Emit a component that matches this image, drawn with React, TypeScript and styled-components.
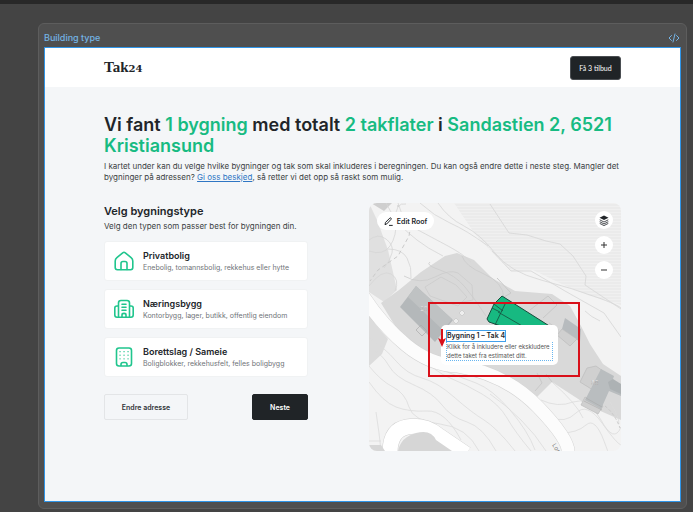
import React from "react";
import styled, { createGlobalStyle } from "styled-components";

const GlobalStyle = createGlobalStyle`
  * { box-sizing: border-box; }
  body { margin: 0; background: #444444; font-family: Inter, sans-serif; color: #212529; }
  button { font-family: inherit; color: inherit; cursor: pointer; margin: 0; }
  h1, h2, p { margin: 0; }
`;

const Canvas = styled.div`
  min-height: 100vh;
  border-top: 4px solid #282828;
  padding: 19px 6px 4px 38px;
`;

const Section = styled.section`
  background: #4f4f4f;
  border: 1px solid #5d5d5d;
  border-radius: 6px;
  padding: 0 5px 6px;
`;

const FrameLabel = styled.div`
  display: flex;
  align-items: center;
  justify-content: space-between;
  height: 23px;
  padding: 4px 1px 0 0;
  font-size: 9px;
  font-weight: 500;
  color: #74b4e6;
`;

const Frame = styled.div`
  border: 1px solid #2f95e8;
  background: #f4f6f8;
  min-height: 455px;
`;

const Header = styled.header`
  display: flex;
  align-items: center;
  justify-content: space-between;
  height: 39px;
  padding: 0 59px;
  background: #fff;
`;

const Logo = styled.a`
  font-family: "Liberation Serif", serif;
  font-size: 15px;
  line-height: 18px;
  font-weight: 700;
  color: #212529;
  text-decoration: none;
`;

const LogoNumber = styled.span`
  font-family: "DejaVu Serif", serif;
  font-size: 10px;
`;

const QuoteButton = styled.button`
  width: 51px;
  height: 24px;
  padding: 0;
  border: 1px solid #4a4e52;
  border-radius: 3px;
  background: #202427;
  color: #fff;
  font-family: Lato, sans-serif;
  font-size: 7px;
`;

const Main = styled.main`
  padding: 27px 59px 0;
`;

const Title = styled.h1`
  font-size: 18px;
  line-height: 21px;
  font-weight: 600;
`;

const Green = styled.span`
  color: #17bb82;
`;

const Text = styled.p`
  font-size: 8px;
  line-height: 11px;
  color: #3b3f43;
`;

const Intro = styled(Text)`
  padding-top: 5px;
`;

const Link = styled.a`
  color: #2f76c4;
`;

const Columns = styled.div`
  display: grid;
  grid-template-columns: 17fr 21fr;
  gap: 61px;
  align-items: start;
  padding-top: 20px;
`;

const Subtitle = styled.h2`
  font-size: 11px;
  line-height: 16px;
  font-weight: 600;
  padding-bottom: 2px;
`;

const CardList = styled.div`
  display: grid;
  gap: 8px;
  padding: 9px 0 17px;
`;

const Card = styled.button`
  display: flex;
  align-items: center;
  gap: 9px;
  height: 40px;
  padding: 0 9px;
  border: 1px solid #f0f2f3;
  border-radius: 3px;
  background: #fff;
  text-align: left;
`;

const CardIcon = styled.svg`
  width: 20px;
  height: 20px;
  flex: none;
  fill: none;
  stroke: #20c58d;
  stroke-width: 1.6;
  stroke-linecap: round;
  stroke-linejoin: round;
`;

const CardText = styled.span`
  display: grid;
  white-space: nowrap;
`;

const CardTitle = styled.span`
  font-size: 9px;
  line-height: 12px;
  font-weight: 600;
`;

const CardHint = styled.span`
  font-size: 7px;
  line-height: 11px;
  color: #6f7478;
`;

const Actions = styled.div`
  display: flex;
  justify-content: space-between;
`;

const ActionButton = styled.button<{ $primary?: boolean }>`
  height: 26px;
  width: ${(p) => (p.$primary ? 56 : 84)}px;
  padding: 0;
  border: 1px solid ${(p) => (p.$primary ? "#202427" : "#e3e5e7")};
  border-radius: 2px;
  background: ${(p) => (p.$primary ? "#202427" : "transparent")};
  color: ${(p) => (p.$primary ? "#fff" : "#303438")};
  font-size: 7px;
  font-weight: 600;
`;

const MapPanel = styled.div`
  position: relative;
  aspect-ratio: 252 / 248;
`;

const MapArt = styled.svg`
  display: block;
  width: 100%;
  height: 100%;
  border-radius: 8px;
`;

const EditButton = styled.button`
  position: absolute;
  top: 9px;
  left: 8px;
  display: flex;
  align-items: center;
  justify-content: center;
  gap: 4px;
  width: 57px;
  height: 18px;
  padding: 0;
  border: 0;
  border-radius: 9px;
  background: #fff;
  font-size: 7px;
  font-weight: 600;
  white-space: nowrap;
`;

const MapControls = styled.div`
  position: absolute;
  top: 8px;
  right: 8px;
  display: grid;
  gap: 7px;
`;

const RoundButton = styled.button`
  display: grid;
  place-items: center;
  width: 18px;
  height: 18px;
  padding: 0;
  border: 0;
  border-radius: 50%;
  background: #fff;
`;

const Tooltip = styled.div`
  position: absolute;
  left: 72px;
  top: 122px;
  width: 117px;
  height: 40px;
  padding: 5px;
  border-radius: 5px;
  background: #fff;
`;

const TooltipTitle = styled.div`
  width: max-content;
  border: 1px solid #42a0ea;
  font-size: 7px;
  line-height: 10px;
  font-weight: 600;
`;

const TooltipText = styled.p`
  border: 1px dotted #69b6f0;
  border-top: 0;
  font-size: 6px;
  line-height: 9px;
  color: #555;
  white-space: nowrap;
`;

const Highlight = styled.div`
  position: absolute;
  left: 59px;
  top: 99px;
  width: 152px;
  height: 75px;
  border: 2px solid #d9101a;
  pointer-events: none;
`;

const Arrow = styled.svg`
  position: absolute;
  left: 69px;
  top: 125px;
`;

const HouseIcon = () => (
  <CardIcon viewBox="0 0 20 20" aria-hidden="true">
    <path d="M8.7 1.8 2.9 6.6Q1.2 8 1.2 10v6.5q0 2.2 2.2 2.2h13.2q2.2 0 2.2-2.2V10q0-2-1.7-3.4l-5.8-4.8q-1.3-1-2.6 0z" />
    <path d="M7 18.5v-6q0-2 2-2h2q2 0 2 2v6" />
  </CardIcon>
);

const OfficeIcon = () => (
  <CardIcon viewBox="0 0 20 20" aria-hidden="true">
    <path d="M4.5 18V4q0-2.5 2.5-2.5h6q2.5 0 2.5 2.5v14M4.5 7H3Q.8 7 .8 9v7q0 2.2 2.2 2.2h14q2.2 0 2.2-2.2V9q0-2-2.2-2h-1.5M8 5.2h4M8 8.3h4M8 11.3h4M8 18v-2q0-1.6 2-1.6t2 1.6v2" />
  </CardIcon>
);

const BlockIcon = () => (
  <CardIcon viewBox="0 0 20 20" aria-hidden="true">
    <rect x="2.5" y="1" width="15" height="18" rx="2.5" />
    <path d="M7 18.5v-1q0-2 2-2h2q2 0 2 2v1" />
    <path strokeWidth="1.3" d="M6 4.7h.1M10 4.7h.1M14 4.7h.1M6 8.2h.1M10 8.2h.1M14 8.2h.1M6 11.8h.1M10 11.8h.1M14 11.8h.1" />
  </CardIcon>
);

const cards = [
  { title: "Privatbolig", hint: "Enebolig, tomannsbolig, rekkehus eller hytte", Icon: HouseIcon },
  { title: "Næringsbygg", hint: "Kontorbygg, lager, butikk, offentlig eiendom", Icon: OfficeIcon },
  { title: "Borettslag / Sameie", hint: "Boligblokker, rekkehusfelt, felles boligbygg", Icon: BlockIcon },
];

const TerrainMap = () => (
  <MapArt viewBox="369 203 252 248" preserveAspectRatio="xMidYMid slice" role="img" aria-label="Kart over Sandastien 2">
    <defs>
      <pattern id="hatch" width="4" height="3" patternUnits="userSpaceOnUse">
        <rect width="4" height="3" fill="#f0f0f0" />
        <path d="M0 1H4" stroke="#e6e6e6" strokeWidth="1" />
      </pattern>
    </defs>
    <rect x="369" y="203" width="252" height="248" fill="#f3f3f3" />
    <path d="M454 203 475 234 490 250 511 271 533 270 566 286 590 296 621 305V203z" fill="url(#hatch)" />
    <path d="M369 203 377 220 388 250 397 290 384 302 369 292z" fill="#e0e0e0" />
    <path d="M371 203 384 211 392 203z" fill="#cfcfcf" />
    <path d="M381 303 399 290 421 272 445 256 457 253 474 260 492 278 515 291 552 294 570 306 581 326 590 344 603 364 621 376V420L589 406 552 382 530 404 508 389 477 372 435 364 405 342z" fill="#d9d9d9" />
    <path d="M369 314 376 325 388 339 382 354 369 366z" fill="#dcdcdc" />
    <g fill="none" stroke="#d6d6d6" strokeWidth="0.8">
      <path d="M490 204 509 233 527 235 546 241 560 244 573 256 586 276 585 285 621 309" />
      <path d="M386 203q9 17 15 23t16 14 26 16M398 203q5 19 20 27t30 16 23 16M420 203q14 13 30 20t38 23M438 203q10 15 26 23t31 27 46 27 58 18 22 12" />
      <path d="M369 240q9-7 17-1t6 14-8 15M369 251q14 5 21-5t6-27 10-15M388 249q14 0 19 9t4 20M369 286q13-17 22-12t4 17" />
      <path d="M492 251l19 20 20 0 34 20 39 22 17 24M600 321q-9-4-15-10" />
    </g>
    <g fill="none" stroke="#cbcbcb" strokeWidth="0.8">
      <path d="M430 262q-5 3 10 8t25 17 21 29M462 256q3 10 22 18t20 24" />
      <path d="M404 276q16 9 31 1t23-4l14 12 1 15-21 4M425 287l16-10 15 8 11 12-9 9-28-10z" />
    </g>
    <g fill="none" stroke="#dcdcdc" strokeWidth="0.8">
      <path d="M369 338q16 10 27 23t26 17 32 19 30 23 31 31M370 347q13 8 19 19t25 19 28 20 25 17 29 29M369 366q12 15 24 21t16 20 31 17 39 27M369 382q14 20 27 25t31 4 34 29M420 355q15 17 30 23t32 16 25 24 24 33M442 370q18 7 34 13t34 27 25 40M490 394q16 11 31 26t25 31M376 412l3 21 2 18M369 441l12 0" />
      <path d="M541 400q17 8 32 2t28 18 20 7M550 417q15 7 26-4t26 10 19 22M561 433q16 0 25-8t18 16 3 10M552 382q25 22 31 36M610 402q9 14 9 22" />
    </g>
    <path d="M363 296Q382 325 406 345T458 366Q506 374 538 407T568 453" fill="none" stroke="#d3d3d3" strokeWidth="14" />
    <path d="M363 296Q382 325 406 345T458 366Q506 374 538 407T568 453" fill="none" stroke="#fcfcfc" strokeWidth="13" />
    <path d="M390 453Q390 430 407 427T438 435L466 454" fill="none" stroke="#d0d0d0" strokeWidth="16" />
    <path d="M390 453Q390 430 407 427T438 435L466 454" fill="none" stroke="#fff" strokeWidth="15" />
    <path d="M398 451Q401 437 416 433T436 440L452 451z" fill="#d6d6d6" />
    <path d="M369 445 381 445 385 451H369z" fill="#d7d7d7" />
    <path d="M497 278 511 293 502 298M530 310 548 296 557 305 543 318M549 323l9 6-1 12M535 391l7-8-5-10M552 382l-6-8" fill="none" stroke="#c8c8c8" />
    <path d="M416 286 453 320 435 342 400 307z" fill="#b4b8ba" />
    <path d="M416 286 452 319 443 330 408 297z" fill="#bfc2c3" />
    <path d="M565 318 581 329 580 342 562 329z" fill="#b7bbbe" />
    <path d="M557 335 562 329 577 339 570 346z" fill="#d0d0d0" stroke="#bbb" strokeWidth="0.7" />
    <path d="M596 366 603 371 593 390 580 382 587 368zM585 397l18 9-5 8-17-9z" fill="#d0d0d0" stroke="#bbb" strokeWidth="0.7" />
    <path d="M601 369 614 376 612 382 621 384V396L609 391 601 409 585 400z" fill="#b9bdbf" />
    <path d="M608 382 613 379 621 384V394L610 389z" fill="#adb2b4" />
    <path d="M584 401l18 9M586 398l16 9" stroke="#aaa" strokeWidth="0.6" />
    <g fill="#eee" stroke="#c5c5c5" strokeWidth="0.7">
      <path d="M459 313l3 3 3-3-3-3zM453 321l3 3 3-3-3-3z" />
      <path d="M416 330l6 6 5-5-6-6z" fill="none" stroke="#aaa" />
    </g>
    <text x="420" y="311" fontFamily="Inter" fontSize="6" fill="#eee" stroke="#888" strokeWidth="0.2">20</text>
    <text x="591" y="385" fontFamily="Inter" fontSize="6" fill="#eee" stroke="#888" strokeWidth="0.2">58</text>
    <text transform="translate(552 445) rotate(58)" fontFamily="Inter" fontSize="6" fill="#777">Lor</text>
    <path d="M502 296 551 327 542 340 489 322 487 319 494 304z" fill="#17b981" stroke="#174c3c" />
    <path d="M506 302 495 325M494 304l9 7M498 312l26 15M492 308l8 4" fill="none" stroke="#174c3c" strokeWidth="0.8" />
    <path d="M398 205v2M411 225l-2 11-11 20-20 14-8 11" fill="none" stroke="#c9c9c9" strokeDasharray="4 3" />
    <path d="M605 406q10 8 15 22" fill="none" stroke="#c9c9c9" strokeDasharray="3 2" />
  </MapArt>
);

export default function App() {
  return (
    <>
      <GlobalStyle />
      <Canvas>
        <Section>
          <FrameLabel>
            <span>Building type</span>
            <svg width="12" height="10" viewBox="0 0 12 10" fill="none" stroke="currentColor" strokeLinecap="round" strokeLinejoin="round" aria-hidden="true">
              <path d="M3.5 2.5 1 5l2.5 2.5M8.5 2.5 11 5 8.5 7.5M7 1 5 9" />
            </svg>
          </FrameLabel>
          <Frame>
            <Header>
              <Logo href="#">Tak<LogoNumber>24</LogoNumber></Logo>
              <QuoteButton>Få 3 tilbud</QuoteButton>
            </Header>
            <Main>
              <Title>
                Vi fant <Green>1 bygning</Green> med totalt <Green>2 takflater</Green> i <Green>Sandastien 2, 6521 Kristiansund</Green>
              </Title>
              <Intro>
                I kartet under kan du velge hvilke bygninger og tak som skal inkluderes i beregningen. Du kan også endre dette i neste steg. Mangler det bygninger på adressen? <Link href="#">Gi oss beskjed</Link>, så retter vi det opp så raskt som mulig.
              </Intro>
              <Columns>
                <div>
                  <Subtitle>Velg bygningstype</Subtitle>
                  <Text>Velg den typen som passer best for bygningen din.</Text>
                  <CardList>
                    {cards.map(({ title, hint, Icon }) => (
                      <Card key={title}>
                        <Icon />
                        <CardText>
                          <CardTitle>{title}</CardTitle>
                          <CardHint>{hint}</CardHint>
                        </CardText>
                      </Card>
                    ))}
                  </CardList>
                  <Actions>
                    <ActionButton>Endre adresse</ActionButton>
                    <ActionButton $primary>Neste</ActionButton>
                  </Actions>
                </div>
                <MapPanel>
                  <TerrainMap />
                  <EditButton>
                    <svg width="9" height="9" viewBox="0 0 9 9" fill="none" stroke="#212529" strokeLinejoin="round" aria-hidden="true">
                      <path d="M1 7.7 1.5 5.4 5.8 1.1q.6-.5 1.2 0t0 1.3L2.8 6.9zM5 8.4h3.7" />
                    </svg>
                    Edit Roof
                  </EditButton>
                  <MapControls>
                    <RoundButton aria-label="Kartlag">
                      <svg width="10" height="11" viewBox="0 0 10 11" aria-hidden="true">
                        <path d="M5 .5 9.5 2.8 5 5.1.5 2.8z" fill="#212529" />
                        <path d="M.7 4.8 5 7l4.3-2.2M.7 6.7 5 8.9l4.3-2.2M.7 8.4 5 10.6l4.3-2.2" fill="none" stroke="#212529" strokeWidth="0.8" />
                      </svg>
                    </RoundButton>
                    <RoundButton aria-label="Zoom inn">
                      <svg width="8" height="8" viewBox="0 0 8 8" stroke="#333" aria-hidden="true"><path d="M1 4h6M4 1v6" /></svg>
                    </RoundButton>
                    <RoundButton aria-label="Zoom ut">
                      <svg width="8" height="8" viewBox="0 0 8 8" stroke="#333" aria-hidden="true"><path d="M1 4h6" /></svg>
                    </RoundButton>
                  </MapControls>
                  <Tooltip role="tooltip">
                    <TooltipTitle>Bygning 1 – Tak 4</TooltipTitle>
                    <TooltipText>Klikk for å inkludere eller ekskludere<br />dette taket fra estimatet ditt.</TooltipText>
                  </Tooltip>
                  <Highlight />
                  <Arrow width="8" height="20" viewBox="0 0 8 20" aria-hidden="true">
                    <path d="M4 1v12" stroke="#d9101a" strokeWidth="2" />
                    <path d="M0 10 4 12 8 10 4 19z" fill="#d9101a" />
                  </Arrow>
                </MapPanel>
              </Columns>
            </Main>
          </Frame>
        </Section>
      </Canvas>
    </>
  );
}
